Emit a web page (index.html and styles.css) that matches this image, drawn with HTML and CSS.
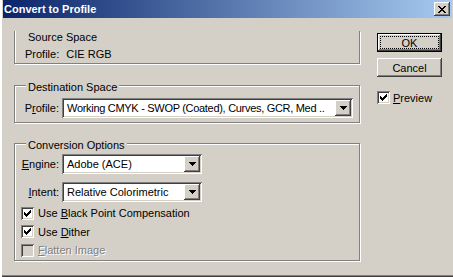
FILE: index.html
```html
<!DOCTYPE html>
<html>
<head>
<title>Convert to Profile</title>
<link rel="stylesheet" href="styles.css">
</head>
<body>
<div class="window">
  <div class="titlebar">
    <span class="title">Convert to Profile</span>
    <span class="close">
      <svg width="8" height="7" viewBox="0 0 8 7" shape-rendering="crispEdges">
        <path d="M0 0h2v1h-2zM6 0h2v1h-2zM1 1h2v1h-2zM5 1h2v1h-2zM2 2h4v1h-4zM3 3h2v1h-2zM2 4h4v1h-4zM1 5h2v1h-2zM5 5h2v1h-2zM0 6h2v1h-2zM6 6h2v1h-2z" fill="#000"/>
      </svg>
    </span>
  </div>
  <div class="content">
    <div class="groups">
      <div class="group group_source">
        <div class="legend">Source Space</div>
        <div class="info_row">
          <span>Profile:</span>
          <span class="info_value">CIE RGB</span>
        </div>
      </div>

      <div class="group group_dest">
        <div class="legend">Destination Space</div>
        <div class="field">
          <label class="field_label">P<u>r</u>ofile:</label>
          <div class="combo combo_wide">
            <span class="combo_value">Working CMYK - SWOP (Coated), Curves, GCR, Med ..</span>
            <span class="combo_button">
              <svg width="7" height="4" viewBox="0 0 7 4" shape-rendering="crispEdges"><path d="M0 0H7V1H6V2H5V3H4V4H3V3H2V2H1V1H0Z" fill="#000"/></svg>
            </span>
          </div>
        </div>
      </div>

      <div class="group group_conv">
        <div class="legend">Conversion Options</div>
        <div class="field field_engine">
          <label class="field_label"><u>E</u>ngine:</label>
          <div class="combo">
            <span class="combo_value">Adobe (ACE)</span>
            <span class="combo_button">
              <svg width="7" height="4" viewBox="0 0 7 4" shape-rendering="crispEdges"><path d="M0 0H7V1H6V2H5V3H4V4H3V3H2V2H1V1H0Z" fill="#000"/></svg>
            </span>
          </div>
        </div>
        <div class="field field_intent">
          <label class="field_label"><u>I</u>ntent:</label>
          <div class="combo">
            <span class="combo_value">Relative Colorimetric</span>
            <span class="combo_button">
              <svg width="7" height="4" viewBox="0 0 7 4" shape-rendering="crispEdges"><path d="M0 0H7V1H6V2H5V3H4V4H3V3H2V2H1V1H0Z" fill="#000"/></svg>
            </span>
          </div>
        </div>
        <div class="checks">
          <label class="check">
            <span class="box">
              <svg width="7" height="7" viewBox="0 0 7 7" shape-rendering="crispEdges"><path d="M0 2H1V3H2V4H3V3H4V2H5V1H6V0H7V3H6V4H5V5H4V6H3V7H2V6H1V5H0Z" fill="#000"/></svg>
            </span>
            <span class="check_text">Use <u>B</u>lack Point Compensation</span>
          </label>
          <label class="check">
            <span class="box">
              <svg width="7" height="7" viewBox="0 0 7 7" shape-rendering="crispEdges"><path d="M0 2H1V3H2V4H3V3H4V2H5V1H6V0H7V3H6V4H5V5H4V6H3V7H2V6H1V5H0Z" fill="#000"/></svg>
            </span>
            <span class="check_text">Use <u>D</u>ither</span>
          </label>
          <label class="check disabled">
            <span class="box"></span>
            <span class="check_text"><u>F</u>latten Image</span>
          </label>
        </div>
      </div>
    </div>

    <div class="actions">
      <button class="btn btn_default"><span class="focus">OK</span></button>
      <button class="btn btn_cancel">Cancel</button>
      <label class="check check_preview">
        <span class="box">
          <svg width="7" height="7" viewBox="0 0 7 7" shape-rendering="crispEdges"><path d="M0 2H1V3H2V4H3V3H4V2H5V1H6V0H7V3H6V4H5V5H4V6H3V7H2V6H1V5H0Z" fill="#000"/></svg>
        </span>
        <span class="check_text"><u>P</u>review</span>
      </label>
    </div>
  </div>
</div>
</body>
</html>
```

FILE: styles.css
```css
body {
  margin: 0;
  background-color: #d4d0c8;
  font-family: "Liberation Sans", Arial, sans-serif;
  font-size: 11px;
  color: #000;
}
.window {
  width: 453px;
  height: 277px;
  box-sizing: border-box;
  padding: 0 1px 0 3px;
  background-color: #d4d0c8;
  box-shadow: inset 2px 0 #fff, inset 0 -1px #404040, inset 0 -2px #808080;
}
.titlebar {
  height: 18px;
  display: flex;
  align-items: center;
  justify-content: space-between;
  padding-left: 1px;
  background: linear-gradient(to right, #0a246a, #a6caf0);
  color: #fff;
  font-weight: bold;
  font-size: 11px;
}
.close {
  width: 16px;
  height: 14px;
  margin-right: 2px;
  display: flex;
  align-items: center;
  justify-content: center;
  background-color: #d4d0c8;
  box-shadow: inset -1px -1px #404040, inset 1px 1px #fff,
      inset -2px -2px #808080;
}
.content {
  display: flex;
  padding-left: 11px;
}
.groups {
  width: 346px;
  margin-top: 15px;
}
.group {
  border: 1px solid #808080;
  box-shadow: 1px 1px 0 #fff, inset 1px 1px 0 #fff;
}
.group_source {
  border-top: none;
  box-shadow: 1px 1px 0 #fff, inset 1px 0 0 #fff;
  padding-bottom: 2px;
}
.group_dest {
  margin-top: 21px;
  padding-bottom: 4px;
}
.group_conv {
  margin-top: 20px;
  padding-bottom: 0.5px;
}
.legend {
  width: fit-content;
  margin: -5px 0 0 11px;
  padding: 0 2px;
  line-height: 13px;
  background-color: #d4d0c8;
}
.group_source .legend { margin-top: -2px; }
.info_row {
  margin-top: 4px;
  padding-left: 10px;
  line-height: 13px;
}
.info_value { margin-left: 4px; }
.field {
  display: flex;
  align-items: center;
  height: 20px;
  margin-top: 4px;
}
.field_engine { margin-top: 2px; }
.field_intent { margin-top: 8px; }
.field_label {
  width: 44px;
  text-align: right;
  margin-right: 3px;
}
.combo {
  width: 140px;
  height: 20px;
  box-sizing: border-box;
  padding: 2px;
  display: flex;
  background-color: #fff;
  box-shadow: inset 1px 1px #808080, inset -1px -1px #fff,
      inset 2px 2px #404040, inset -2px -2px #d4d0c8;
}
.combo_wide { width: 291px; }
.combo_wide .combo_value { letter-spacing: -0.3px; }
.combo_value {
  flex-grow: 1;
  padding-left: 3px;
  line-height: 16px;
  white-space: nowrap;
  overflow: hidden;
}
.combo_button {
  width: 16px;
  height: 16px;
  flex-shrink: 0;
  display: flex;
  align-items: center;
  justify-content: center;
  background-color: #d4d0c8;
  box-shadow: inset -1px -1px #404040, inset 1px 1px #fff,
      inset -2px -2px #808080;
}
.checks {
  margin-top: 2px;
  padding-left: 6px;
}
.check {
  display: flex;
  align-items: center;
  height: 18.5px;
}
.box {
  width: 13px;
  height: 13px;
  box-sizing: border-box;
  flex-shrink: 0;
  display: flex;
  align-items: center;
  justify-content: center;
  background-color: #fff;
  box-shadow: inset 1px 1px #808080, inset -1px -1px #fff,
      inset 2px 2px #404040, inset -2px -2px #d4d0c8;
}
.check_text { margin-left: 4px; }
.disabled .box { background-color: #d4d0c8; }
.disabled .check_text {
  color: #808080;
  text-shadow: 1px 1px 0 #fff;
}
.actions {
  display: flex;
  flex-direction: column;
  margin-left: 17px;
  margin-top: 15px;
}
.btn {
  width: 65px;
  height: 19px;
  box-sizing: border-box;
  padding: 0;
  border: none;
  font: inherit;
  color: #000;
  background-color: #d4d0c8;
  box-shadow: inset -1px -1px #404040, inset 1px 1px #fff,
      inset -2px -2px #808080;
}
.btn_default {
  display: flex;
  padding: 3px;
  border: 1px solid #000;
}
.focus {
  flex-grow: 1;
  display: flex;
  align-items: center;
  justify-content: center;
  outline: 1px dotted #000;
}
.btn_cancel { margin-top: 6px; }
.check_preview {
  height: 13px;
  margin-top: 14px;
}
.check_preview .check_text { margin-left: 3px; }
```
